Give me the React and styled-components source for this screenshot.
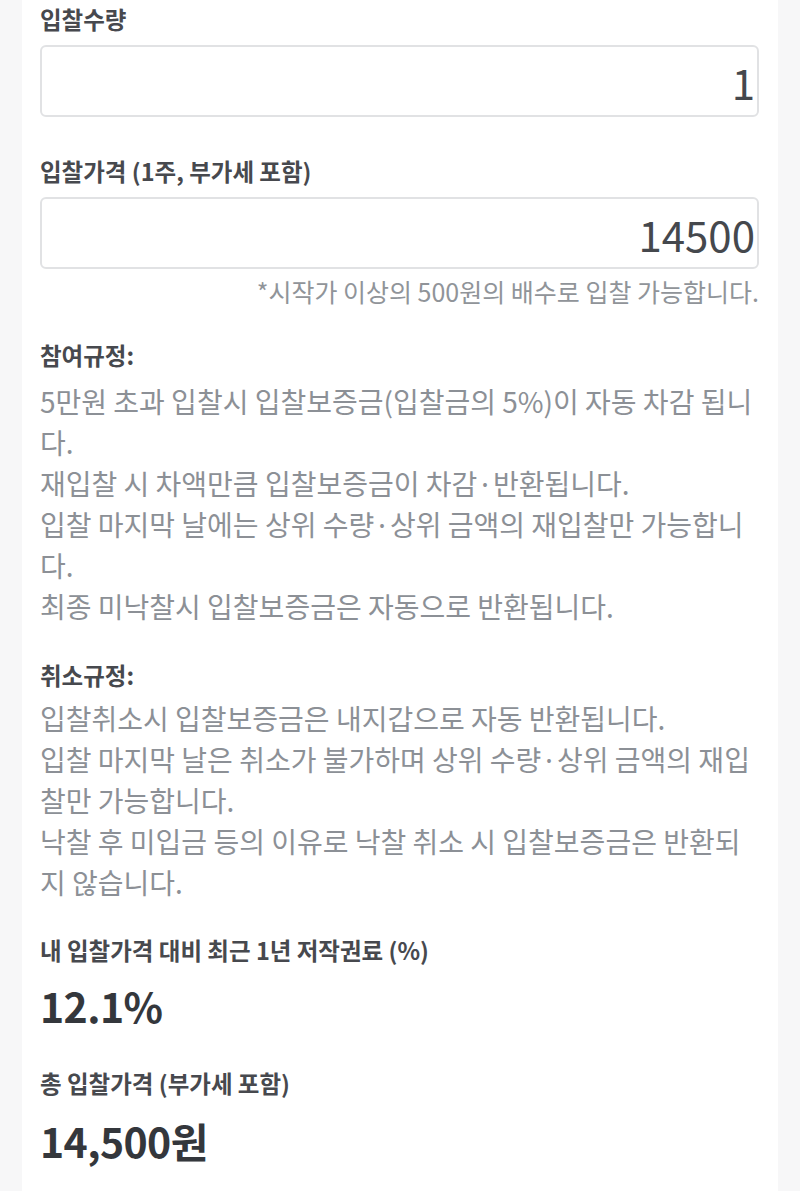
import React from "react";
import styled, { createGlobalStyle } from "styled-components";

const GlobalStyle = createGlobalStyle`
  html, body {
    margin: 0;
    padding: 0;
    background: #f7f7f8;
  }
  body {
    font-family: "Noto Sans CJK KR", "Noto Sans", sans-serif;
  }
`;

const Panel = styled.main`
  margin: 0 22px;
  min-height: 1191px;
  box-sizing: border-box;
  background: #ffffff;
  padding: 3px 19px 40px 18px;
  display: flex;
  flex-direction: column;
`;

const Label = styled.div`
  margin-top: ${(p) => p.$gap || 0}px;
  font-size: 23.5px;
  line-height: 32px;
  font-weight: 700;
  color: #47494e;
`;

const AmountInput = styled.input`
  margin-top: 10px;
  box-sizing: border-box;
  width: 100%;
  height: 72px;
  padding: 0 2px 0 16px;
  border: 2px solid #e1e2e4;
  border-radius: 6px;
  background: #fff;
  outline: none;
  text-align: right;
  font-family: "Noto Sans CJK KR", "Noto Sans", sans-serif;
  font-size: 42px;
  color: #45484d;
`;

const Note = styled.div`
  margin-top: 6px;
  text-align: right;
  font-size: 25px;
  line-height: 32px;
  color: #909499;
`;

const RuleList = styled.div`
  margin-top: ${(p) => p.$gap}px;
  display: flex;
  flex-direction: column;
`;

const RuleLine = styled.p`
  margin: 0;
  font-size: 28px;
  line-height: 41px;
  color: #8c9096;
  word-break: break-all;
`;

const BigValue = styled.div`
  margin-top: ${(p) => p.$gap}px;
  font-size: 41px;
  line-height: 56px;
  font-weight: 700;
  color: #34373c;
  letter-spacing: -0.6px;
`;

const joinRules = [
  "5만원 초과 입찰시 입찰보증금(입찰금의 5%)이 자동 차감 됩니다.",
  "재입찰 시 차액만큼 입찰보증금이 차감·반환됩니다.",
  "입찰 마지막 날에는 상위 수량·상위 금액의 재입찰만 가능합니다.",
  "최종 미낙찰시 입찰보증금은 자동으로 반환됩니다.",
];

const cancelRules = [
  "입찰취소시 입찰보증금은 내지갑으로 자동 반환됩니다.",
  "입찰 마지막 날은 취소가 불가하며 상위 수량·상위 금액의 재입찰만 가능합니다.",
  "낙찰 후 미입금 등의 이유로 낙찰 취소 시 입찰보증금은 반환되지 않습니다.",
];

export default function App() {
  return (
    <>
      <GlobalStyle />
      <Panel>
        <Label>입찰수량</Label>
        <AmountInput readOnly value="1" />

        <Label $gap={38}>입찰가격 (1주, 부가세 포함)</Label>
        <AmountInput readOnly value="14500" />
        <Note>*시작가 이상의 500원의 배수로 입찰 가능합니다.</Note>

        <Label $gap={32}>참여규정:</Label>
        <RuleList $gap={10}>
          {joinRules.map((t) => (
            <RuleLine key={t}>{t}</RuleLine>
          ))}
        </RuleList>

        <Label $gap={32}>취소규정:</Label>
        <RuleList $gap={7}>
          {cancelRules.map((t) => (
            <RuleLine key={t}>{t}</RuleLine>
          ))}
        </RuleList>

        <Label $gap={31}>내 입찰가격 대비 최근 1년 저작권료 (%)</Label>
        <BigValue $gap={11}>12.1%</BigValue>

        <Label $gap={34}>총 입찰가격 (부가세 포함)</Label>
        <BigValue $gap={13}>14,500원</BigValue>
      </Panel>
    </>
  );
}
